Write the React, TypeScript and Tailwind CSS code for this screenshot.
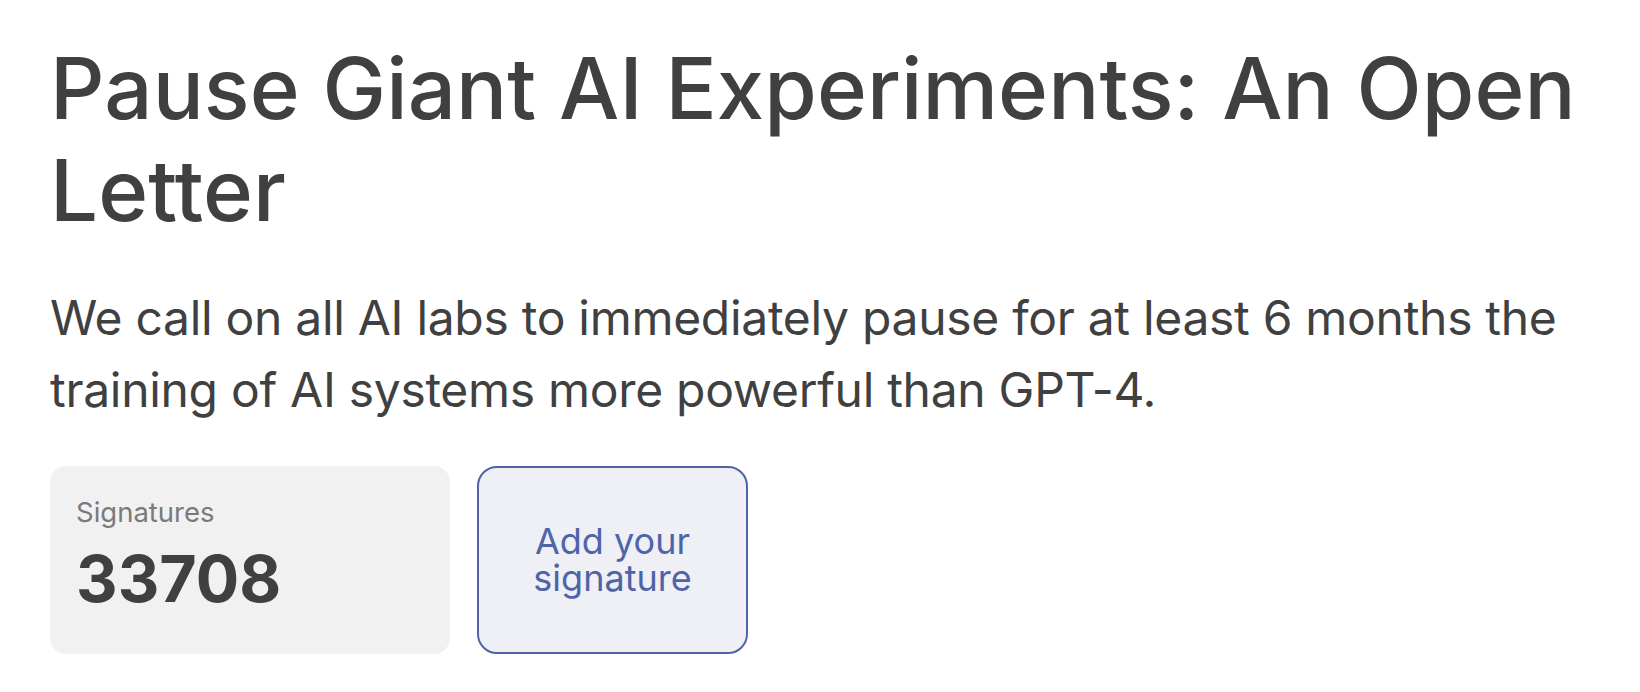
import React from "react";

export default function App() {
  return (
    <div
      className="min-h-screen bg-white px-[50px] pt-[38px] text-[#404040]"
      style={{ fontFamily: "Inter, 'Noto Sans', sans-serif" }}
    >
      <h1 className="text-[85px] leading-[102px] font-[550] tracking-[0.1px]">
        Pause Giant AI Experiments: An Open Letter
      </h1>
      <p className="mt-[40px] text-[48px] leading-[72px] font-normal tracking-[-0.3px]">
        We call on all AI labs to immediately pause for at least 6 months the training of AI systems more powerful than GPT-4.
      </p>
      <div className="mt-[40px] flex gap-[27px]">
        <div className="flex h-[188px] w-[400px] flex-col rounded-[16px] bg-[#f1f1f1] px-[26px] pt-[27px]">
          <div className="text-[27.5px] leading-[39px] text-[#7a7a7a]">Signatures</div>
          <div className="mt-[15px] text-[64.5px] leading-[64px] font-bold text-[#404040]">33708</div>
        </div>
        <button className="flex h-[188px] w-[271px] items-center justify-center rounded-[20px] border-2 border-[#5063a8] bg-[#eef0f5] text-center text-[36px] leading-[37px] text-[#4f64a8]">
          <span>
            Add your
            <br />
            signature
          </span>
        </button>
      </div>
    </div>
  );
}
